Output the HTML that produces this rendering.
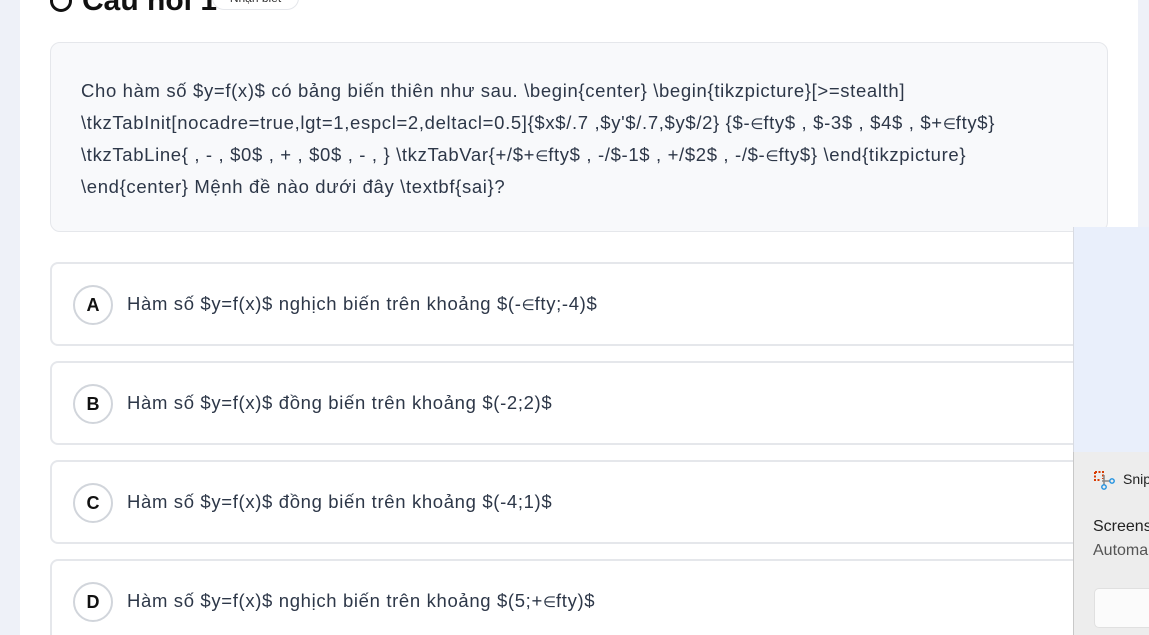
<!DOCTYPE html>
<html><head><meta charset="utf-8"><style>
*{box-sizing:border-box;margin:0;padding:0}
html,body{width:1149px;height:635px;overflow:hidden}
body{background:#eef1f8;font-family:"Liberation Sans","Noto Sans CJK SC",sans-serif;position:relative}
.card{position:absolute;left:20px;top:0;width:1118px;height:635px;background:#fff}
.title{position:absolute;left:50px;top:-16px;font-size:30px;font-weight:bold;color:#111;display:flex;align-items:center;gap:10px}
.badge{position:absolute;left:212px;top:-14px;width:87px;height:24px;border:1px solid #e5e7eb;border-radius:12px;font-size:12px;text-align:center;line-height:22px;color:#333}
.q{position:absolute;left:50px;top:42px;width:1058px;height:190px;background:#f8f9fb;border:1px solid #e5e7eb;border-radius:10px;padding:32px 30px;font-size:18.5px;letter-spacing:0.65px;line-height:32px;color:#2d3748;white-space:nowrap;overflow:hidden}
.e{font-family:"DejaVu Sans",sans-serif;font-size:15px;letter-spacing:0;line-height:0}
.opt{position:absolute;left:50px;width:1100px;height:84px;border:2px solid #e5e7eb;border-radius:8px;background:#fff;font-size:18.5px;letter-spacing:0.65px;color:#2d3748;white-space:nowrap}
.opt .c{position:absolute;left:21px;top:21px;width:40px;height:40px;border:2px solid #d1d5db;border-radius:50%;text-align:center;line-height:36px;font-weight:bold;font-size:18px;letter-spacing:0;color:#111}
.opt .t{position:absolute;left:75px;top:29px}
.ov{position:absolute;left:1073px;top:227px;width:80px;height:420px;background:#e9effb;border-left:1px solid #d8dbe2}
.ov2{position:absolute;left:1073px;top:452px;width:80px;height:200px;background:#ededed;border-left:1px solid #c8c8c8;font-size:16px;color:#222;white-space:nowrap;overflow:hidden}
</style></head><body>
<div class="card"></div>
<div class="title"><span style="display:inline-block;width:22px;height:22px;border:3px solid #111;border-radius:50%"></span>Câu hỏi 1</div>
<div class="badge">Nhận biết</div>
<div class="q">Cho hàm số $y=f(x)$ có bảng biến thiên như sau. \begin{center} \begin{tikzpicture}[&gt;=stealth]<br>\tkzTabInit[nocadre=true,lgt=1,espcl=2,deltacl=0.5]{$x$/.7 ,$y'$/.7,$y$/2} {$-<span class="e">∈</span>fty$ , $-3$ , $4$ , $+<span class="e">∈</span>fty$}<br>\tkzTabLine{ , - , $0$ , + , $0$ , - , } \tkzTabVar{+/$+<span class="e">∈</span>fty$ , -/$-1$ , +/$2$ , -/$-<span class="e">∈</span>fty$} \end{tikzpicture}<br>\end{center} Mệnh đề nào dưới đây \textbf{sai}?</div>
<div class="opt" style="top:262px"><div class="c">A</div><div class="t">Hàm số $y=f(x)$ nghịch biến trên khoảng $(-<span class="e">∈</span>fty;-4)$</div></div>
<div class="opt" style="top:361px"><div class="c">B</div><div class="t">Hàm số $y=f(x)$ đồng biến trên khoảng $(-2;2)$</div></div>
<div class="opt" style="top:460px"><div class="c">C</div><div class="t">Hàm số $y=f(x)$ đồng biến trên khoảng $(-4;1)$</div></div>
<div class="opt" style="top:559px"><div class="c">D</div><div class="t">Hàm số $y=f(x)$ nghịch biến trên khoảng $(5;+<span class="e">∈</span>fty)$</div></div>
<div class="ov"></div>
<div class="ov2">
<svg style="position:absolute;left:20px;top:19px" width="22" height="20" viewBox="0 0 22 20"><path d="M1 1h8v7" fill="none" stroke="#d83b01" stroke-width="2" stroke-dasharray="2 1.5"/><path d="M1 1v8h5" fill="none" stroke="#d83b01" stroke-width="2" stroke-dasharray="2 1.5"/><path d="M10 4v10M8 10h8" stroke="#888" stroke-width="1.5"/><circle cx="10" cy="16" r="2.2" fill="none" stroke="#1e90e0" stroke-width="1.4"/><circle cx="18" cy="10" r="2.2" fill="none" stroke="#1e90e0" stroke-width="1.4"/></svg>
<div style="position:absolute;left:49px;top:19px;font-size:14px">Snip</div>
<div style="position:absolute;left:19px;top:66px">Screens</div>
<div style="position:absolute;left:19px;top:90px;color:#555">Automa</div>
<div style="position:absolute;left:20px;top:136px;width:70px;height:40px;background:#fbfbfb;border:1px solid #e0e0e0;border-radius:5px"></div>
</div>
</body></html>
